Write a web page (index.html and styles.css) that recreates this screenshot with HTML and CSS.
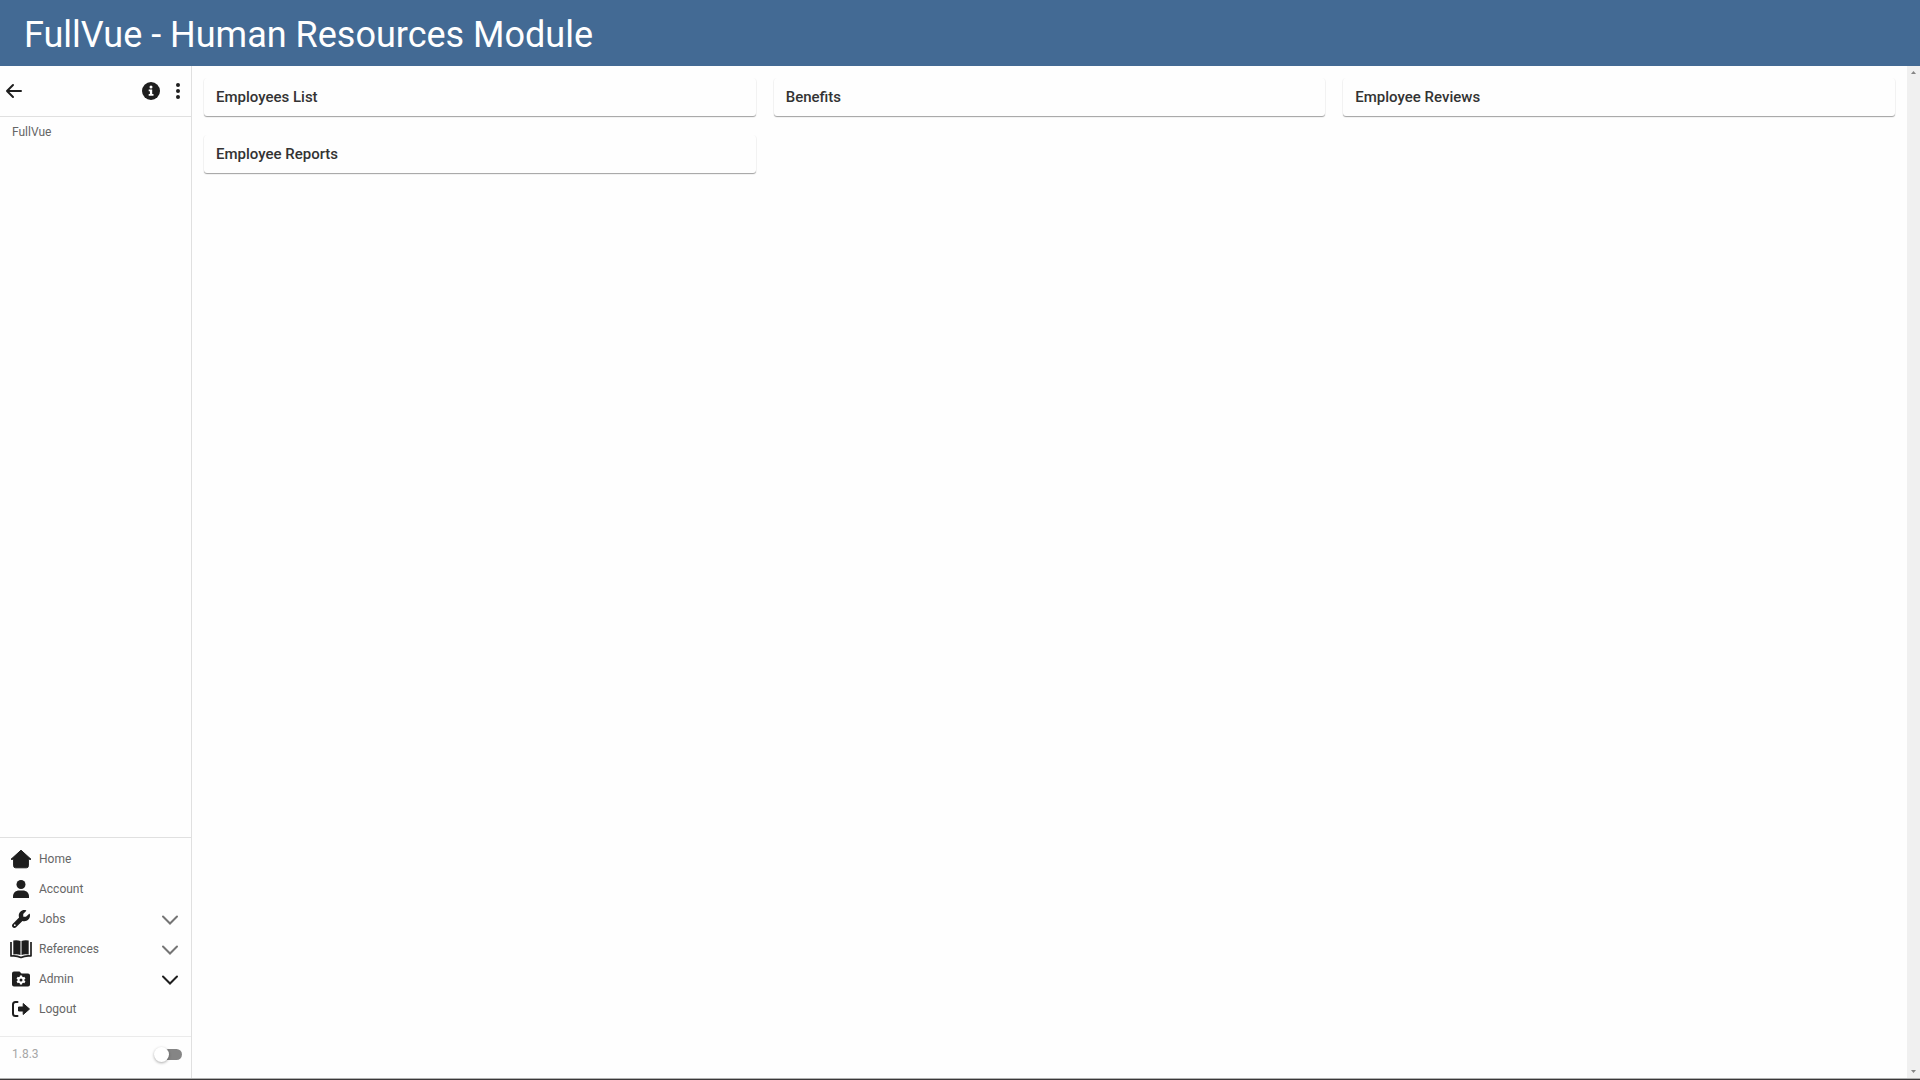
FILE: index.html
```html
<!DOCTYPE html>
<html lang="en">
<head>
<meta charset="utf-8">
<meta name="viewport" content="width=device-width, initial-scale=1">
<title>FullVue - Human Resources Module</title>
<link rel="stylesheet" href="styles.css">
</head>
<body>
<header class="banner"><h1>FullVue - Human Resources Module</h1></header>
<div class="app">
  <aside class="sidebar">
    <div class="toolbar">
      <button class="icon-btn" type="button" aria-label="Back">
        <svg width="18" height="18" viewBox="0 0 18 18" fill="none" stroke="currentColor" stroke-width="2" stroke-linecap="round" stroke-linejoin="round"><path d="M16 9H2M8 3L2 9l6 6"/></svg>
      </button>
      <button class="icon-btn info" type="button" aria-label="Information">
        <svg width="18" height="18" viewBox="0 0 18 18"><circle cx="9" cy="9" r="9" fill="currentColor"/><circle cx="9" cy="5" r="1.500" fill="#fff"/><path d="M6.700 7.500h3.500v4.500h1.300v1.700H6.700V12h1.200V9.200H6.700z" fill="#fff"/></svg>
      </button>
      <button class="icon-btn" type="button" aria-label="More options">
        <svg width="18" height="18" viewBox="0 0 18 18" fill="currentColor"><circle cx="9" cy="3" r="2"/><circle cx="9" cy="9" r="2"/><circle cx="9" cy="15" r="2"/></svg>
      </button>
    </div>
    <div class="tree"><a href="#">FullVue</a></div>
    <nav class="menu" aria-label="Main">
      <a class="item" href="#">
        <svg class="glyph" width="22" height="20" viewBox="0 0 22 20" fill="currentColor"><path d="M11 1.200L1 10.300h2.600v6.500q0 2 2 2h10.800q2 0 2-2v-6.500H21z" stroke="currentColor" stroke-linejoin="round"/></svg>
        <span>Home</span>
      </a>
      <a class="item" href="#">
        <svg class="glyph" width="22" height="20" viewBox="0 0 22 20" fill="currentColor"><circle cx="11" cy="5.500" r="4.500"/><path d="M3 19v-1.500c0-4 3-6 6-6h4c3 0 6 2 6 6V19z"/></svg>
        <span>Account</span>
      </a>
      <a class="item" href="#">
        <svg class="glyph" width="22" height="20" viewBox="0 0 22 20"><g transform="translate(2 1) scale(.035156)"><path fill="currentColor" fill-rule="evenodd" d="M352 320c88.400 0 160-71.600 160-160 0-15.300-2.200-30.100-6.200-44.200-3.100-10.800-16.400-13.200-24.300-5.300l-76.800 76.800c-3 3-7.100 4.700-11.300 4.700H336c-8.800 0-16-7.200-16-16v-57.400c0-4.200 1.700-8.300 4.700-11.300l76.800-76.800c7.900-7.900 5.400-21.200-5.300-24.300C382.100 2.200 367.300 0 352 0c-88.400 0-160 71.600-160 160 0 19.100 3.400 37.500 9.500 54.500L19.900 396.100C7.200 408.800 0 426.100 0 444.100 0 481.600 30.400 512 67.900 512c18 0 35.300-7.200 48-19.900l181.600-181.600c17 6.200 35.400 9.500 54.500 9.500zM80 408a24 24 0 1 1 0 48 24 24 0 1 1 0-48z"/></g></svg>
        <span>Jobs</span>
        <svg class="chevron" width="18" height="10" viewBox="0 0 18 10"><path d="M2 1.500l7 7 7-7"/></svg>
      </a>
      <a class="item" href="#">
        <svg class="glyph" width="22" height="20" viewBox="0 0 22 20" fill="currentColor"><path d="M3.300 1.500Q7.500 0.800 10.500 2v14Q7.500 14.800 3.300 15.500zM11.500 2q3-1.200 7.200-.5v14q-4.200-.7-7.200.5z"/><path d="M1 3v14q5.500-.8 10 1.500 4.500-2.300 10-1.500V3" fill="none" stroke="currentColor" stroke-width="1.700" stroke-linejoin="round"/></svg>
        <span>References</span>
        <svg class="chevron" width="18" height="10" viewBox="0 0 18 10"><path d="M2 1.500l7 7 7-7"/></svg>
      </a>
      <a class="item" href="#">
        <svg class="glyph" width="22" height="20" viewBox="0 0 22 20"><path d="M4 2.500h5.500l2 2H18q2 0 2 2v9q0 2-2 2H4q-2 0-2-2v-11q0-2 2-2z" fill="currentColor"/><path d="M11 6.500v9M7.100 8.750l7.800 4.500M7.100 13.250l7.800-4.500" stroke="#fff" stroke-width="2.200"/><circle cx="11" cy="11" r="3.400" fill="#fff"/><circle cx="11" cy="11" r="1.500" fill="currentColor"/></svg>
        <span>Admin</span>
        <svg class="chevron strong" width="18" height="10" viewBox="0 0 18 10"><path d="M2 1.500l7 7 7-7"/></svg>
      </a>
      <a class="item" href="#">
        <svg class="glyph" width="22" height="20" viewBox="0 0 22 20"><path d="M7.500 3H5.500Q3 3 3 5.500v9Q3 17 5.500 17h2" fill="none" stroke="currentColor" stroke-width="2" stroke-linecap="round"/><path d="M8.500 8h4.700V4.500L19.500 10l-6.300 5.500V12H8.500z" fill="currentColor" stroke="currentColor" stroke-linejoin="round"/></svg>
        <span>Logout</span>
      </a>
    </nav>
    <div class="foot">
      <label for="theme">1.8.3</label>
      <input class="switch" type="checkbox" role="switch" id="theme">
    </div>
  </aside>
  <main class="content">
    <button class="card" type="button">Employees List</button>
    <button class="card" type="button">Benefits</button>
    <button class="card" type="button">Employee Reviews</button>
    <button class="card" type="button">Employee Reports</button>
  </main>
  <div class="scrollbar" aria-hidden="true">
    <svg width="5" height="3" viewBox="0 0 5 3"><path d="M0 3L2.500 0 5 3z"/></svg>
    <svg width="5" height="3" viewBox="0 0 5 3"><path d="M0 0L2.500 3 5 0z"/></svg>
  </div>
</div>
</body>
</html>
```
FILE: styles.css
```css
* {
  box-sizing: border-box;
}

body {
  margin: 0;
  min-height: 100vh;
  display: flex;
  flex-direction: column;
  border-bottom: 1px solid #3a3839;
  background: #fefefe;
  color: #1e1e1e;
  font-family: Roboto, "Liberation Sans", sans-serif;
}

.banner {
  padding: 14px 24px 10px;
  background: #436a94;
  color: #fff;
}

.banner h1 {
  margin: 0;
  font: 400 36px/42px Roboto, "Liberation Sans", sans-serif;
}

.app {
  flex: 1;
  display: flex;
  border-bottom: 1px solid #b0b0b0;
}

.sidebar {
  width: 192px;
  flex-shrink: 0;
  display: flex;
  flex-direction: column;
  border-right: 1px solid #e0e0e0;
}

.toolbar {
  display: flex;
  align-items: center;
  gap: 9px;
  height: 51px;
  padding: 0 4px 1px 5px;
  border-bottom: 1px solid #e0e0e0;
}

.icon-btn {
  display: flex;
  padding: 0;
  border: 0;
  background: none;
  color: #1e1e1e;
}

.info {
  margin-left: auto;
}

.tree {
  flex: 1;
  padding: 4px 12px;
}

.tree a,
.item {
  color: #666;
  font-size: 12px;
  line-height: 18px;
  text-decoration: none;
}

.menu {
  padding: 6px 12px 12px 10px;
  border-top: 1px solid #e0e0e0;
}

.item {
  display: flex;
  align-items: center;
  height: 30px;
  gap: 7px;
}

.glyph {
  color: #1e1e1e;
}

.chevron {
  margin-left: auto;
  margin-top: 2px;
  fill: none;
  stroke: #757575;
  stroke-width: 2;
  stroke-linecap: round;
}

.strong {
  stroke: #1e1e1e;
}

.foot {
  display: flex;
  align-items: center;
  justify-content: space-between;
  height: 42px;
  padding: 0 9px 7px 12px;
  border-top: 1px solid #ebebeb;
  color: #a6a6a6;
  font-size: 12px;
}

.switch {
  appearance: none;
  display: flex;
  align-items: center;
  width: 24px;
  height: 11px;
  margin: 0;
  border-radius: 6px;
  background: #858585;
}

.switch::before {
  content: "";
  width: 15px;
  height: 15px;
  flex-shrink: 0;
  margin-left: -4px;
  border-radius: 50%;
  background: #fff;
  box-shadow: 0 1px 3px #0005;
}

.content {
  flex: 1;
  display: grid;
  grid-template-columns: repeat(3, 1fr);
  align-content: start;
  gap: 19px 18px;
  padding: 12px;
}

.card {
  height: 38px;
  padding: 0 12px;
  border: 0;
  border-radius: 3px;
  background: #fefefe;
  box-shadow: 0 1px 1px #0005, 0 1px 2px #0001;
  color: #333;
  font: 500 15px/20px Roboto, "Liberation Sans", sans-serif;
  text-align: left;
}

.scrollbar {
  width: 13px;
  display: flex;
  flex-direction: column;
  align-items: center;
  justify-content: space-between;
  padding: 5px 0;
  background: #f0f0f0;
  fill: #858585;
}
```
